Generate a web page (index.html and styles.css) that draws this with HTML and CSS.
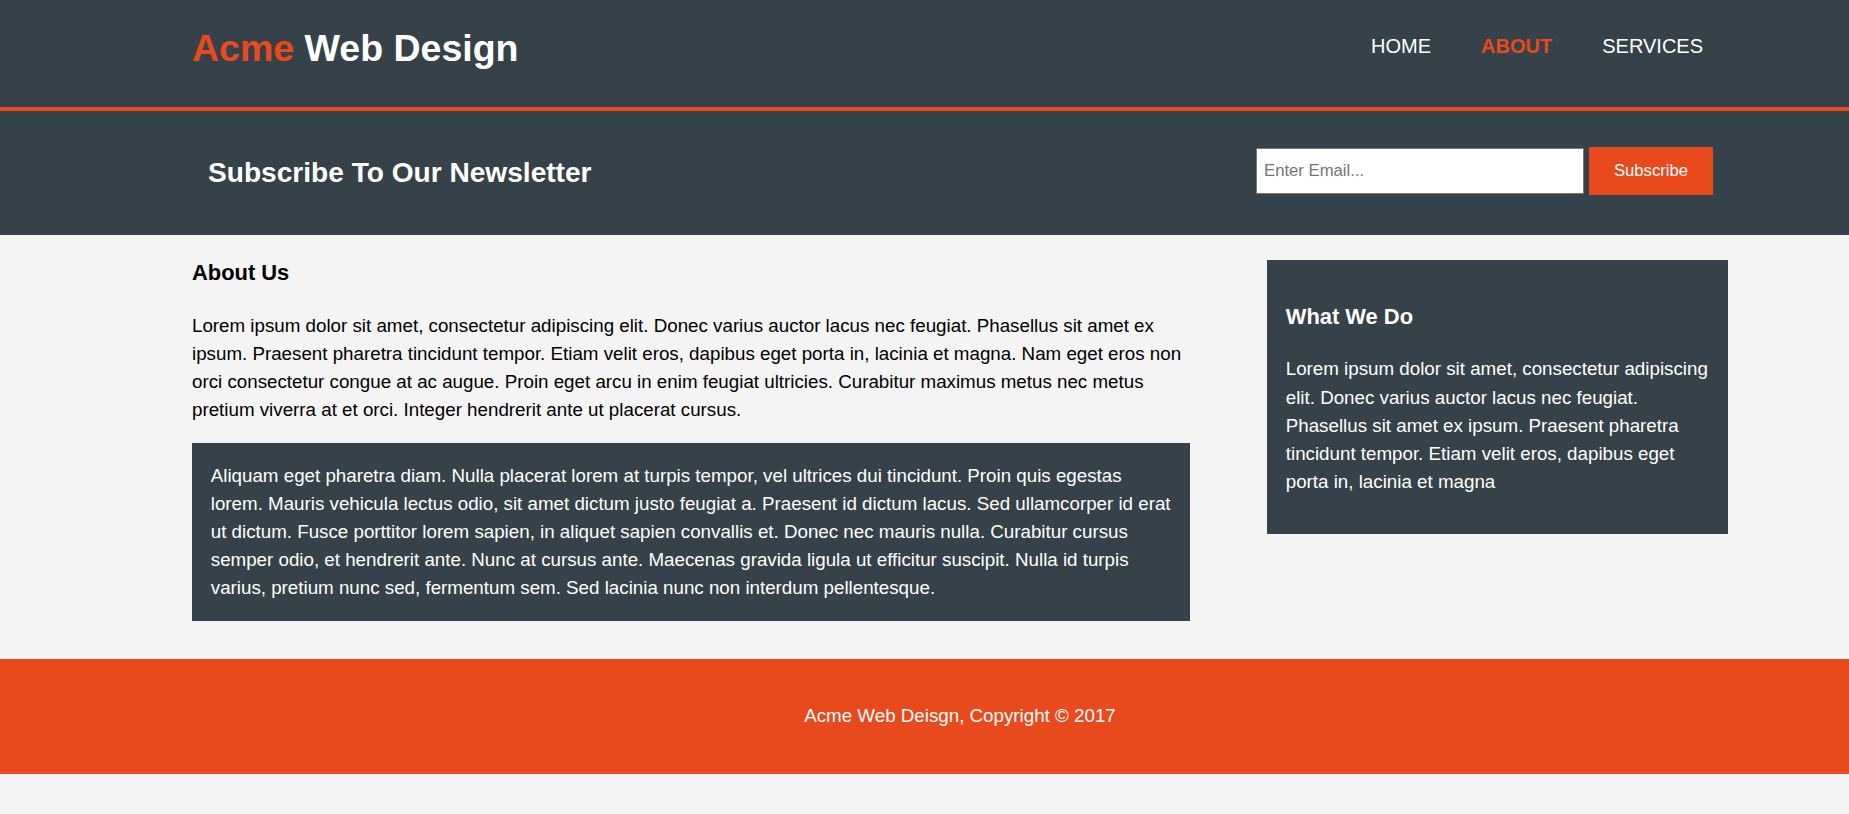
FILE: index.html
```html
<!DOCTYPE html>
<html lang="en">
<head>
<meta charset="utf-8">
<title>Acme Web Design | About</title>
<link rel="stylesheet" href="styles.css">
</head>
<body>
<header class="site-header">
  <div class="container header-inner">
    <div class="branding">
      <h1><span class="highlight">Acme</span> Web Design</h1>
    </div>
    <nav class="nav">
      <ul class="nav-list">
        <li><a href="#">Home</a></li>
        <li class="current"><a href="#">About</a></li>
        <li><a href="#">Services</a></li>
      </ul>
    </nav>
  </div>
</header>

<section class="newsletter">
  <div class="container newsletter-inner">
    <h1>Subscribe To Our Newsletter</h1>
    <form class="newsletter-form">
      <input class="email-input" type="email" placeholder="Enter Email...">
      <button class="button-1" type="submit">Subscribe</button>
    </form>
  </div>
</section>

<section class="main">
  <div class="container main-inner">
    <article class="main-col">
      <h3 class="page-title">About Us</h3>
      <p>Lorem ipsum dolor sit amet, consectetur adipiscing elit. Donec varius auctor lacus nec feugiat. Phasellus sit amet ex ipsum. Praesent pharetra tincidunt tempor. Etiam velit eros, dapibus eget porta in, lacinia et magna. Nam eget eros non orci consectetur congue at ac augue. Proin eget arcu in enim feugiat ultricies. Curabitur maximus metus nec metus pretium viverra at et orci. Integer hendrerit ante ut placerat cursus.</p>
      <p class="dark">Aliquam eget pharetra diam. Nulla placerat lorem at turpis tempor, vel ultrices dui tincidunt. Proin quis egestas lorem. Mauris vehicula lectus odio, sit amet dictum justo feugiat a. Praesent id dictum lacus. Sed ullamcorper id erat ut dictum. Fusce porttitor lorem sapien, in aliquet sapien convallis et. Donec nec mauris nulla. Curabitur cursus semper odio, et hendrerit ante. Nunc at cursus ante. Maecenas gravida ligula ut efficitur suscipit. Nulla id turpis varius, pretium nunc sed, fermentum sem. Sed lacinia nunc non interdum pellentesque.</p>
    </article>
    <aside class="sidebar">
      <div class="dark">
        <h3>What We Do</h3>
        <p>Lorem ipsum dolor sit amet, consectetur adipiscing elit. Donec varius auctor lacus nec feugiat. Phasellus sit amet ex ipsum. Praesent pharetra tincidunt tempor. Etiam velit eros, dapibus eget porta in, lacinia et magna</p>
      </div>
    </aside>
  </div>
</section>

<footer class="site-footer">
  <div class="container">
    <p>Acme Web Deisgn, Copyright &copy; 2017</p>
  </div>
</footer>
</body>
</html>
```

FILE: styles.css
```css
* {
  box-sizing: border-box;
}

body {
  margin: 0;
  padding: 0;
  font-family: "Liberation Sans", Arial, Helvetica, sans-serif;
  font-size: 18.75px;
  line-height: 1.5;
  background-color: #f4f4f4;
  color: #000;
}

.container {
  width: 1536px;
  margin-left: 192px;
}

/* Header */
.site-header {
  background: #35424a;
  color: #fff;
  height: 111px;
  border-bottom: 4px solid #e8491d;
}

.header-inner {
  display: flex;
  justify-content: space-between;
  align-items: flex-start;
  padding-top: 20px;
}

.branding h1 {
  margin: 0;
  font-size: 37.5px;
  line-height: 56.25px;
  font-weight: bold;
}

.highlight {
  color: #e8491d;
}

.nav {
  margin-top: 11px;
}

.nav-list {
  list-style: none;
  margin: 0;
  padding: 0;
  display: flex;
}

.nav-list li {
  padding: 0 25px;
}

.nav-list a {
  color: #fff;
  text-decoration: none;
  text-transform: uppercase;
  font-size: 20px;
  line-height: 30px;
}

.nav-list .current a {
  color: #e8491d;
  font-weight: bold;
}

/* Newsletter */
.newsletter {
  background: #35424a;
  color: #fff;
  height: 124px;
}

.newsletter-inner {
  display: flex;
  justify-content: space-between;
  align-items: flex-start;
  padding: 0 15px 0 16px;
}

.newsletter h1 {
  margin: 41px 0 0;
  font-size: 28.1px;
  line-height: 42.2px;
  font-weight: bold;
}

.newsletter-form {
  margin-top: 36px;
  display: flex;
  align-items: center;
  gap: 5px;
}

.email-input {
  width: 328px;
  height: 46px;
  padding: 0 7px;
  border: 1px solid #767676;
  background: #fff;
  font-family: "Liberation Sans", Arial, sans-serif;
  font-size: 16.7px;
  color: #000;
  outline: none;
}

.email-input::placeholder {
  color: #757575;
}

.button-1 {
  width: 124px;
  height: 48px;
  border: 0;
  background: #e8491d;
  color: #fff;
  font-family: "Liberation Sans", Arial, sans-serif;
  font-size: 16.7px;
  padding: 0;
}

/* Main */
.main-inner {
  display: flex;
  justify-content: space-between;
  align-items: flex-start;
}

.main-col {
  width: 998px;
}

.main-col h3,
.sidebar h3 {
  font-size: 21.9px;
  line-height: 1.5;
  margin: 21.9px 0;
  font-weight: bold;
}

.main-col p {
  margin: 18.75px 0;
}

.main-col p.dark {
  margin: 18.75px 0 12.5px;
}

.dark {
  padding: 18.75px;
  background: #35424a;
  color: #fff;
  margin: 12.5px 0;
}

.sidebar {
  width: 461px;
  margin-top: 12.5px;
}

.sidebar p {
  margin: 18.75px 0;
}

/* Footer */
.site-footer {
  margin-top: 25px;
  padding: 25px 0;
  background: #e8491d;
  color: #fff;
  text-align: center;
}

.site-footer p {
  margin: 18.75px 0;
}
```
